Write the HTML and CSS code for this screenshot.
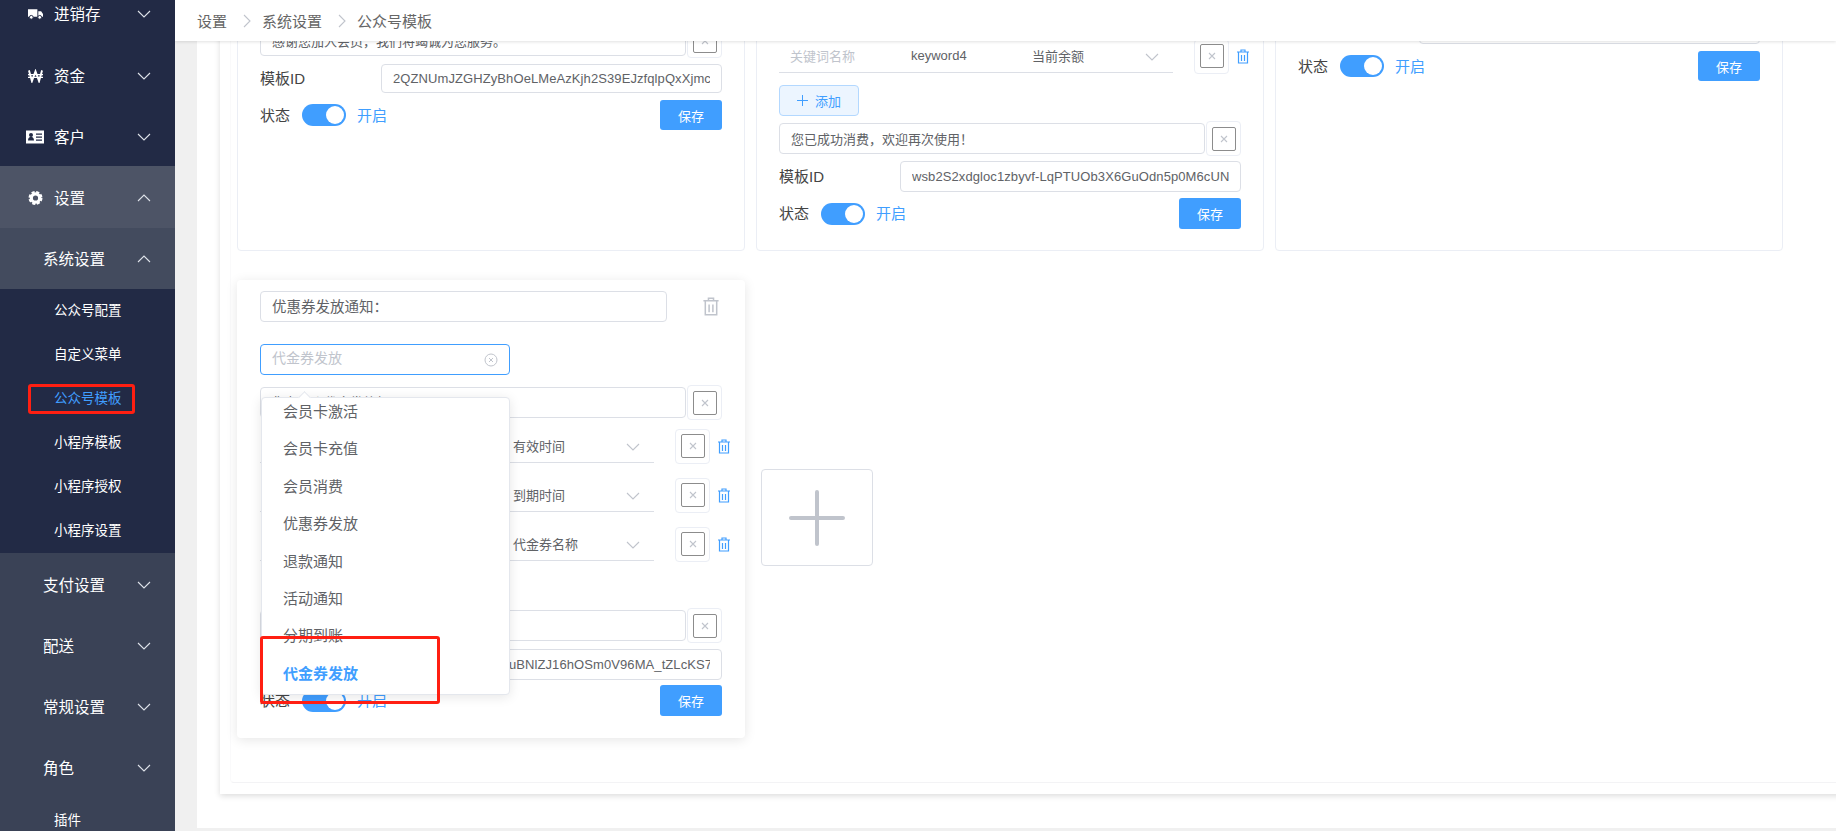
FILE: index.html
```html
<!DOCTYPE html>
<html lang="zh">
<head>
<meta charset="utf-8">
<title>公众号模板</title>
<link rel="stylesheet" href="styles.css">
</head>
<body>
<svg class="defs" width="0" height="0" aria-hidden="true">
  <symbol id="chev-d" viewBox="0 0 14 8"><path d="M1 1l6 6 6-6" fill="none" stroke="currentColor" stroke-width="1.1"/></symbol>
  <symbol id="chev-u" viewBox="0 0 14 8"><path d="M1 7l6-6 6 6" fill="none" stroke="currentColor" stroke-width="1.1"/></symbol>
  <symbol id="chev-r" viewBox="0 0 8 14"><path d="M1 1l6 6-6 6" fill="none" stroke="currentColor" stroke-width="1.1"/></symbol>
  <symbol id="trash" viewBox="0 0 14 15"><path d="M1 3h12M5 3V1h4v2M2.500 3v11h9V3M5.500 6v6M8.500 6v6" fill="none" stroke="currentColor" stroke-width="1.2"/></symbol>
  <symbol id="cross" viewBox="0 0 8 8"><path d="M1 1l6 6M7 1L1 7" fill="none" stroke="currentColor" stroke-width="1.1"/></symbol>
</svg>
<div class="app">
  <aside class="sidebar">
    <div class="nav-row raised top">
      <svg class="nav-icon" viewBox="0 0 16 12"><path fill="#fff" d="M0 1h10v8H0zM11 3h3l2 3v3h-5z"/><circle cx="3.500" cy="9.500" r="2" fill="#fff" stroke="#222a45"/><circle cx="12.500" cy="9.500" r="2" fill="#fff" stroke="#222a45"/></svg>
      <span>进销存</span><svg class="chev"><use href="#chev-d"/></svg>
    </div>
    <div class="nav-row raised">
      <svg class="nav-icon" viewBox="0 0 16 12"><path fill="none" stroke="#fff" stroke-width="2" d="M1 0l3.200 11.500L8 1l3.800 10.500L15 0"/><path fill="none" stroke="#fff" stroke-width="1.300" d="M0 4.500h16M0 7.500h16"/></svg>
      <span>资金</span><svg class="chev"><use href="#chev-d"/></svg>
    </div>
    <div class="nav-row raised">
      <svg class="nav-icon wide" viewBox="0 0 18 13"><path fill="#fff" d="M0 0h18v13H0z"/><circle cx="5" cy="4.500" r="2" fill="#222a45"/><path fill="#222a45" d="M2 10c0-5 6-5 6 0zM10 3h6v1.300h-6zM10 6h6v1.300h-6zM10 9h6v1.300h-6z"/></svg>
      <span>客户</span><svg class="chev"><use href="#chev-d"/></svg>
    </div>
    <div class="nav-row open-1">
      <svg class="nav-icon" viewBox="0 0 14 14"><circle cx="7" cy="7" r="4.200" fill="none" stroke="#fff" stroke-width="3.200"/><circle cx="7" cy="7" r="6" fill="none" stroke="#fff" stroke-width="2" stroke-dasharray="3.100 1.610"/></svg>
      <span>设置</span><svg class="chev"><use href="#chev-u"/></svg>
    </div>
    <div class="nav-row sub open-2"><span>系统设置</span><svg class="chev"><use href="#chev-u"/></svg></div>
    <div class="leaf">公众号配置</div>
    <div class="leaf">自定义菜单</div>
    <div class="leaf active">公众号模板<i class="mark mark-nav"></i></div>
    <div class="leaf">小程序模板</div>
    <div class="leaf">小程序授权</div>
    <div class="leaf">小程序设置</div>
    <div class="lower">
      <div class="nav-row sub"><span>支付设置</span><svg class="chev"><use href="#chev-d"/></svg></div>
      <div class="nav-row sub"><span>配送</span><svg class="chev"><use href="#chev-d"/></svg></div>
      <div class="nav-row sub"><span>常规设置</span><svg class="chev"><use href="#chev-d"/></svg></div>
      <div class="nav-row sub"><span>角色</span><svg class="chev"><use href="#chev-d"/></svg></div>
      <div class="leaf plain">插件</div>
    </div>
  </aside>

  <main class="main">
    <header class="topbar">
      <span>设置</span><svg class="crumb-sep"><use href="#chev-r"/></svg>
      <span>系统设置</span><svg class="crumb-sep"><use href="#chev-r"/></svg>
      <span>公众号模板</span>
    </header>
    <div class="panel">
      <div class="outer-card">
        <div class="inner-card">
          <div class="grid">

            <section class="card card-a short">
              <div class="msg-row">
                <div class="field grow">感谢您加入会员<span class="cp">，</span>我们将竭诚为您服务<span class="cp">。</span></div>
                <div class="xbox"><b><svg><use href="#cross"/></svg></b></div>
              </div>
              <div class="tpl-row"><label>模板ID</label><div class="field tpl"><span class="clip">2QZNUmJZGHZyBhOeLMeAzKjh2S39EJzfqlpQxXjmc</span></div></div>
              <div class="status-row"><label>状态</label><i class="toggle"></i><em>开启</em><button class="save">保存</button></div>
            </section>

            <section class="card card-b">
              <div class="kw-row">
                <div class="kw-line"><span class="c1">关键词名称</span><span class="c2">keyword4</span><span class="c3">当前余额</span><svg class="kw-chev"><use href="#chev-d"/></svg></div>
                <div class="xbox"><b><svg><use href="#cross"/></svg></b></div>
                <svg class="trash"><use href="#trash"/></svg>
              </div>
              <button class="add"><svg viewBox="0 0 11 11"><path d="M5.500 0v11M0 5.500h11" stroke="currentColor" fill="none"/></svg>添加</button>
              <div class="msg-row">
                <div class="field grow">您已成功消费<span class="cp">，</span>欢迎再次使用<span class="cp">！</span></div>
                <div class="xbox"><b><svg><use href="#cross"/></svg></b></div>
              </div>
              <div class="tpl-row"><label>模板ID</label><div class="field tpl"><span class="clip">wsb2S2xdgloc1zbyvf-LqPTUOb3X6GuOdn5p0M6cUN</span></div></div>
              <div class="status-row"><label>状态</label><i class="toggle"></i><em>开启</em><button class="save">保存</button></div>
            </section>

            <section class="card card-c short">
              <div class="tpl-row"><label>模板ID</label><div class="field tpl"></div></div>
              <div class="status-row"><label>状态</label><i class="toggle"></i><em>开启</em><button class="save">保存</button></div>
            </section>

            <section class="card coupon">
              <div class="title-row">
                <div class="field title">优惠券发放通知<span class="cp">：</span></div>
                <svg class="trash big"><use href="#trash"/></svg>
              </div>
              <div class="field select">代金券发放
                <svg class="clear" viewBox="0 0 14 14"><circle cx="7" cy="7" r="6" fill="none" stroke="currentColor"/><path d="M5 5l4 4M9 5l-4 4" fill="none" stroke="currentColor"/></svg>
              </div>
              <div class="msg-row">
                <div class="field grow">您有一张代金券待领取</div>
                <div class="xbox"><b><svg><use href="#cross"/></svg></b></div>
              </div>
              <div class="kw-row first">
                <div class="kw-line"><span class="c1">关键词名称</span><span class="c2">keyword1</span><span class="c3">有效时间</span><svg class="kw-chev"><use href="#chev-d"/></svg></div>
                <div class="xbox"><b><svg><use href="#cross"/></svg></b></div>
                <svg class="trash"><use href="#trash"/></svg>
              </div>
              <div class="kw-row">
                <div class="kw-line"><span class="c1">关键词名称</span><span class="c2">keyword2</span><span class="c3">到期时间</span><svg class="kw-chev"><use href="#chev-d"/></svg></div>
                <div class="xbox"><b><svg><use href="#cross"/></svg></b></div>
                <svg class="trash"><use href="#trash"/></svg>
              </div>
              <div class="kw-row">
                <div class="kw-line"><span class="c1">关键词名称</span><span class="c2">keyword3</span><span class="c3">代金券名称</span><svg class="kw-chev"><use href="#chev-d"/></svg></div>
                <div class="xbox"><b><svg><use href="#cross"/></svg></b></div>
                <svg class="trash"><use href="#trash"/></svg>
              </div>
              <button class="add"><svg viewBox="0 0 11 11"><path d="M5.500 0v11M0 5.500h11" stroke="currentColor" fill="none"/></svg>添加</button>
              <div class="msg-row">
                <div class="field grow">感谢您的使用<span class="cp">！</span></div>
                <div class="xbox"><b><svg><use href="#cross"/></svg></b></div>
              </div>
              <div class="tpl-row"><label>模板ID</label><div class="field tpl"><span class="clip">Xa3kPq9TmWedRpuBNlZJ16hOSm0V96MA_tZLcKS7xQ</span></div></div>
              <div class="status-row"><label>状态</label><i class="toggle"></i><em>开启</em><button class="save">保存</button></div>

              <div class="dropdown">
                <i class="arrow"></i>
                <ul class="options">
                  <li>会员卡激活</li>
                  <li>会员卡充值</li>
                  <li>会员消费</li>
                  <li>优惠券发放</li>
                  <li>退款通知</li>
                  <li>活动通知</li>
                  <li>分期到账</li>
                  <li class="selected">代金券发放</li>
                </ul>
              </div>
              <i class="mark mark-option"></i>
            </section>

            <div class="add-tile"><svg viewBox="0 0 56 56"><path d="M28 2v52M2 28h52" stroke="#c0c4cc" stroke-width="4" stroke-linecap="round" fill="none"/></svg></div>
          </div>
        </div>
      </div>
    </div>
  </main>
</div>
</body>
</html>
```

FILE: styles.css
```css
* { box-sizing: border-box; }
html, body { margin: 0; height: 100%; overflow: hidden; }
body {
  font-family: "Liberation Sans", "Noto Sans CJK SC", sans-serif;
  font-size: 13px;
  color: #606266;
  background: #f0f0f0;
}
.defs { position: absolute; }
.app { display: flex; height: 831px; overflow: hidden; }

/* Sidebar */
.sidebar { flex: 0 0 175px; height: 831px; overflow: hidden; background: #222a45; color: #fff; font-size: 15.500px; }
.nav-row { display: flex; align-items: center; height: 61.600px; padding: 2px 24px 0 28px; }
.nav-row.raised { padding-top: 4px; }
.nav-row.top { margin-top: -18.800px; }
.nav-row.sub { padding-left: 43px; }
.nav-row > span { line-height: 20px; position: relative; top: 1px; }
.nav-icon { width: 15px; height: 14px; margin-right: 11px; flex: none; }
.nav-icon.wide { width: 18px; margin-left: -2px; margin-right: 10px; }
.chev { width: 14px; height: 8px; margin-left: auto; color: #dfe3ea; }
.open-1 { background: #4d5466; }
.open-2 { background: #434b5e; }
.leaf { position: relative; height: 44px; line-height: 44px; padding-left: 54px; font-size: 13.500px; }
.leaf.active { color: #409eff; }
.lower { background: #3a4256; }
.lower .nav-row { height: 61.200px; }
.leaf.plain { height: 46px; line-height: 46px; }
.mark { position: absolute; display: block; border: 3px solid #ff1f12; border-radius: 3px; }
.mark-nav { left: 28px; top: 7px; width: 107px; height: 30px; }

/* Main */
.main { flex: 1; min-width: 0; height: 831px; overflow: hidden; }
.topbar {
  position: relative; z-index: 3;
  display: flex; align-items: center;
  height: 41px; padding-left: 22px;
  background: #fff;
  box-shadow: 0 1px 3px rgba(0, 0, 0, .12);
  font-size: 15px; color: #666;
}
.crumb-sep { width: 8px; height: 14px; margin: 0 11px 0 16px; color: #c0c4cc; }
.panel { margin: -51px -40px 0 22px; padding-bottom: 34px; background: #fff; height: 838px; }
.outer-card { margin-left: 23px; padding: 0 0 11px 10px; background: #fff; box-shadow: 0 2px 6px rgba(0, 0, 0, .14); height: 804px; }
.inner-card { height: 793px; padding-left: 6px; border: 1px solid #f3f3f5; border-top: 0; border-right: 0; border-left-color: #fafafb; border-radius: 0 0 0 4px; }
.grid { display: grid; grid-template-columns: repeat(3, 508px); grid-template-rows: 261px auto; column-gap: 11px; row-gap: 29px; align-items: start; }

/* Cards */
.card { position: relative; width: 508px; height: 261px; padding: 0 22px; border: 1px solid #ebeef5; border-radius: 4px; background: #fff; }
.card-a { padding-top: 34px; }
.card-b { padding-top: 48px; }
.card-c { padding-top: 24px; }
.coupon { height: 458px; padding-top: 10px; border-color: transparent; box-shadow: 0 2px 12px rgba(0, 0, 0, .1); }

.field { height: 31px; line-height: 29px; padding: 0 11px; border: 1px solid #dcdfe6; border-radius: 4px; background: #fff; white-space: nowrap; overflow: hidden; }
.grow { flex: 1; min-width: 0; font-size: 13px; }
.cp { font-family: "Noto Sans CJK TC", sans-serif; }
.clip { display: block; overflow: hidden; letter-spacing: .09px; }
.title-row { display: flex; align-items: center; }
.title { width: 407px; font-size: 14.500px; line-height: 28px; }
.trash { width: 14px; height: 15px; margin-left: 7px; color: #409eff; flex: none; }
.trash.big { width: 18px; height: 19px; margin-left: 35px; color: #c0c4cc; }
.select { position: relative; width: 250px; margin: 22px 0 12px; font-size: 14px; line-height: 27px; color: #c0c4cc; border-color: #409eff; }
.clear { position: absolute; right: 11px; top: 8px; width: 14px; height: 14px; color: #c0c4cc; }

.msg-row { display: flex; align-items: center; height: 31px; }
.xbox { flex: none; display: flex; align-items: center; justify-content: center; width: 35px; height: 35px; margin-left: 1px; border: 1px solid #ebeef5; border-radius: 4px; background: #fff; }
.xbox b { display: flex; align-items: center; justify-content: center; width: 24px; height: 24px; border: 1px solid #8c8c8c; border-radius: 2px; }
.xbox svg { width: 8px; height: 8px; color: #c0c4cc; }

.kw-row { display: flex; align-items: center; height: 34px; margin-bottom: 15px; }
.kw-row.first { margin-top: 11px; }
.kw-line { position: relative; flex: none; display: flex; align-items: center; width: 394px; height: 34px; border-bottom: 1px solid #dcdfe6; }
.c1 { width: 132px; padding-left: 11px; color: #c0c4cc; }
.c2 { width: 121px; }
.c3 { width: 121px; }
.kw-chev { position: absolute; right: 14px; top: 14px; width: 14px; height: 8px; color: #c0c4cc; }
.kw-line + .xbox { margin-left: 21px; }
.add { display: flex; align-items: center; justify-content: center; width: 80px; height: 31px; margin: -3px 0 7px; padding: 0; border: 1px solid #b3d8ff; border-radius: 4px; background: #ecf5ff; color: #409eff; font: inherit; }
.add svg { width: 11px; height: 11px; margin-right: 7px; }
.coupon .add { margin: -2px 0 5px 4px; }

.tpl-row { display: flex; align-items: center; margin-top: 8px; }
.tpl-row label { width: 121px; font-size: 15px; color: #444; position: relative; top: -1px; }
.card-b .tpl-row { margin-top: 7px; }
.tpl { width: 341px; }
.status-row { display: flex; align-items: center; height: 31px; margin-top: 5px; }
.card-b .status-row { margin-top: 6px; }
.status-row label { font-size: 15px; color: #444; width: 42px; position: relative; top: -1px; }
.status-row em { margin-left: 11px; font-style: normal; font-size: 15px; color: #409eff; position: relative; top: -1px; }
.toggle { position: relative; display: block; width: 44px; height: 22px; border-radius: 11px; background: #409eff; }
.toggle::after { content: ""; position: absolute; right: 2px; top: 2px; width: 18px; height: 18px; border-radius: 50%; background: #fff; }
.save { margin-left: auto; width: 62px; height: 31px; padding: 0; border: 0; border-radius: 3px; background: #409eff; color: #fff; font: inherit; }
.short .tpl { height: 29px; line-height: 27px; }
.short .status-row { margin-top: 7px; height: 30px; }
.short .save { height: 30px; }
.card-c .tpl-row { margin-top: 0; }

/* Dropdown */
.dropdown { position: absolute; z-index: 2; left: 23px; top: 116px; width: 249px; height: 298px; border: 1px solid #e4e7ed; border-radius: 4px; background: #fff; box-shadow: 0 2px 12px rgba(0, 0, 0, .1); }
.arrow { position: absolute; left: 38px; top: -5px; width: 9px; height: 9px; transform: rotate(45deg); background: #fff; border-left: 1px solid #e4e7ed; border-top: 1px solid #e4e7ed; }
.options { position: relative; height: 100%; margin: 0; padding: 0; overflow: hidden; list-style: none; }
.options li { height: 37.400px; line-height: 37.400px; padding-left: 21px; font-size: 15px; color: #606266; position: relative; top: -5px; }
.options .selected { color: #409eff; font-weight: 700; }
.mark-option { z-index: 4; left: 22px; top: 355px; width: 180px; height: 68px; }

/* Add tile */
.add-tile { display: flex; align-items: center; justify-content: center; width: 112px; height: 97px; margin: 189px 0 0 5px; border: 1px solid #dcdfe6; border-radius: 4px; }
.add-tile svg { width: 56px; height: 56px; }
```
